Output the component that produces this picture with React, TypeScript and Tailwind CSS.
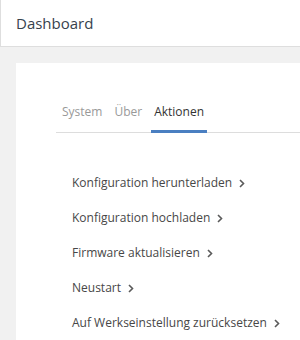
const actions = [
  "Konfiguration herunterladen",
  "Konfiguration hochladen",
  "Firmware aktualisieren",
  "Neustart",
  "Auf Werkseinstellung zurücksetzen",
];

const tabs = ["System", "Über", "Aktionen"];

const Chevron = () => (
  <svg width="6" height="9" viewBox="0 0 6 9" className="shrink-0">
    <path d="M1 1l3.5 3.5L1 8" fill="none" stroke="#5a5a5a" strokeWidth="1.6" />
  </svg>
);

export default function App() {
  return (
    <div className="h-[340px] w-[300px] overflow-hidden bg-[#f1f1f1] font-['Open_Sans',sans-serif]">
      {/* header */}
      <div className="flex h-[47px] items-center border-b border-l border-[#dedede] bg-white pl-[15px]">
        <span className="text-[15px] text-[#37424d]">Dashboard</span>
      </div>

      {/* card */}
      <div className="ml-4 mt-4 h-[300px] bg-white pl-10 pt-[40px]">
        <div className="flex border-b border-[#dddddd]">
          {tabs.map((t, i) => (
            <div
              key={t}
              className={
                i === 2
                  ? "mx-[3px] -mb-px border-b-[3px] border-[#4a7fc1] px-[3px] pb-[9px] text-[12px] text-[#333333]"
                  : "mx-[3px] -mb-px border-b-[3px] border-transparent px-[3px] pb-[9px] text-[12px] text-[#999999]"
              }
            >
              {t}
            </div>
          ))}
        </div>

        <div className="flex flex-col gap-[17px] pl-4 pt-[41px]">
          {actions.map((a) => (
            <div key={a} className="flex items-center gap-[7px] text-[12px] text-[#474747]">
              <span>{a}</span>
              <Chevron />
            </div>
          ))}
        </div>
      </div>
    </div>
  );
}
